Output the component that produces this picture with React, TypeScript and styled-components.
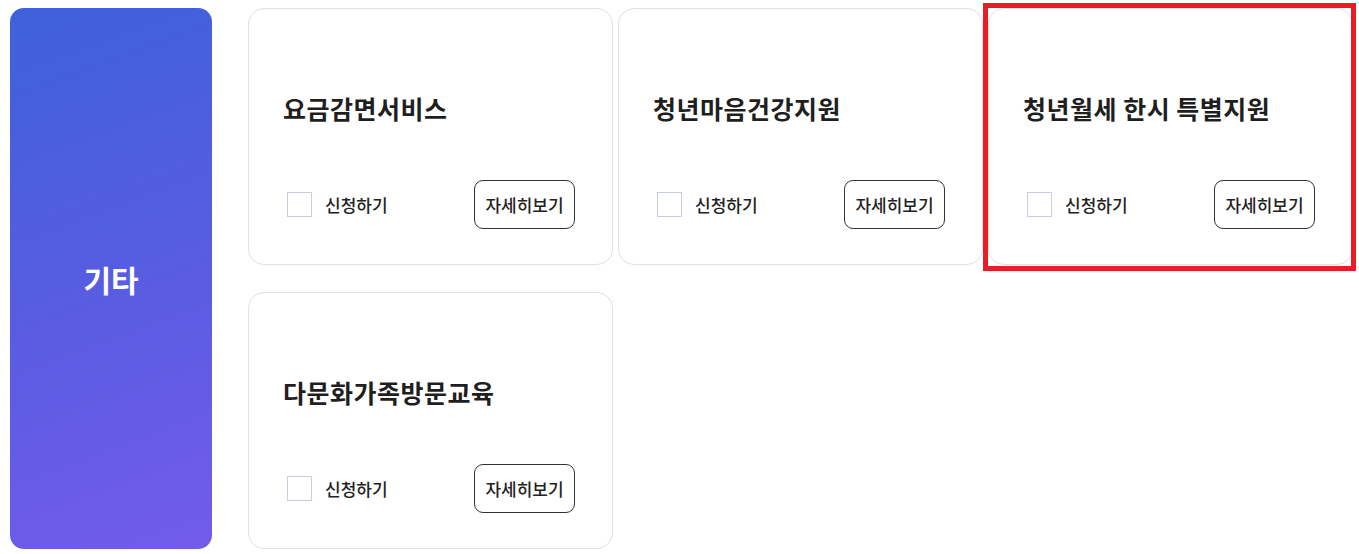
import { useState } from 'react';

import { createGlobalStyle, styled } from 'styled-components';

type Service = {
  id: string;
  title: string;
  highlighted?: boolean;
};

const services: Service[] = [
  { id: 'fee', title: '요금감면서비스' },
  { id: 'mind', title: '청년마음건강지원' },
  { id: 'rent', title: '청년월세 한시 특별지원', highlighted: true },
  { id: 'family', title: '다문화가족방문교육' },
];

const GlobalStyle = createGlobalStyle`
  body {
    margin: 0;
    background: #ffffff;
    font-family: 'Noto Sans CJK KR', 'Noto Sans', sans-serif;
    color: #222222;
  }
`;

const StyledPage = styled.main`
  display: flex;
  align-items: stretch;
  gap: 36px;
  padding: 8px 0 0 10px;
`;

const StyledCategory = styled.aside`
  display: flex;
  align-items: center;
  justify-content: center;
  flex: 0 0 202px;
  border-radius: 14px;
  background: linear-gradient(160deg, #3e61d9 0%, #5a5ce2 55%, #735bec 100%);
`;

const StyledCategoryTitle = styled.h2`
  margin: 0;
  color: #ffffff;
  font-size: 30px;
  font-weight: 700;
  letter-spacing: 0;
`;

const StyledGrid = styled.div`
  display: grid;
  grid-template-columns: repeat(3, 365px);
  grid-auto-rows: 257px;
  column-gap: 5px;
  row-gap: 27px;
`;

const StyledCard = styled.article<{ $highlighted?: boolean }>`
  position: relative;
  box-sizing: border-box;
  display: flex;
  flex-direction: column;
  padding: 0 37px 35px 34px;
  background: #ffffff;
  border: 1px solid #e1e1e1;
  border-radius: 16px;

  &::after {
    content: '';
    display: ${({ $highlighted }) => ($highlighted ? 'block' : 'none')};
    position: absolute;
    inset: -6px -4px -7px -6px;
    border: 5px solid #ec1c24;
    pointer-events: none;
  }
`;

const StyledCardTitle = styled.h3`
  margin: 82px 0 0;
  font-size: 25px;
  line-height: 34px;
  font-weight: 700;
  letter-spacing: 0.5px;
  color: #1f1f1f;
`;

const StyledActions = styled.div`
  display: flex;
  align-items: center;
  justify-content: space-between;
  margin-top: auto;
  padding-left: 4px;
`;

const StyledApply = styled.label`
  display: inline-flex;
  align-items: center;
  gap: 13px;
  font-size: 17px;
  font-weight: 500;
  letter-spacing: 0;
  color: #222222;
  cursor: pointer;
`;

const StyledCheckbox = styled.input`
  box-sizing: border-box;
  width: 25px;
  height: 25px;
  margin: 0;
  appearance: none;
  border: 1px solid #c7cee2;
  background: #ffffff;
  cursor: pointer;

  &:checked {
    background: #4a5fdc;
    border-color: #4a5fdc;
  }
`;

const StyledDetailButton = styled.button`
  box-sizing: border-box;
  width: 101px;
  height: 49px;
  padding: 0;
  border: 1px solid #333333;
  border-radius: 9px;
  background: #ffffff;
  font-family: inherit;
  font-size: 17px;
  font-weight: 500;
  letter-spacing: 0;
  color: #222222;
  cursor: pointer;
`;

export default function App() {
  const [applied, setApplied] = useState<Record<string, boolean>>({});

  return (
    <>
      <GlobalStyle />
      <StyledPage>
        <StyledCategory>
          <StyledCategoryTitle>기타</StyledCategoryTitle>
        </StyledCategory>
        <StyledGrid>
          {services.map(({ id, title, highlighted }) => (
            <StyledCard key={id} $highlighted={highlighted}>
              <StyledCardTitle>{title}</StyledCardTitle>
              <StyledActions>
                <StyledApply>
                  <StyledCheckbox
                    type="checkbox"
                    checked={!!applied[id]}
                    onChange={() => setApplied((prev) => ({ ...prev, [id]: !prev[id] }))}
                  />
                  신청하기
                </StyledApply>
                <StyledDetailButton type="button">자세히보기</StyledDetailButton>
              </StyledActions>
            </StyledCard>
          ))}
        </StyledGrid>
      </StyledPage>
    </>
  );
}
